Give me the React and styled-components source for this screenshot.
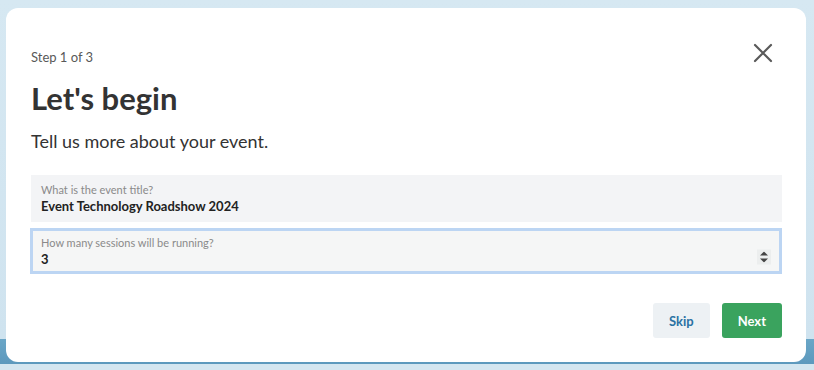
import React from "react";
import styled, { createGlobalStyle } from "styled-components";

const Global = createGlobalStyle`
  html, body { margin: 0; padding: 0; }
  body { font-family: Lato, "Noto Sans", sans-serif; }
`;

const Page = styled.div`
  height: 370px;
  box-sizing: border-box;
  padding: 8px 8px 0 6px;
  background: linear-gradient(
    to bottom,
    #d6e8f2 0px,
    #cfe3ef 339px,
    #6aa6c7 339px,
    #5d99bd 364px,
    #d4e6f0 364px
  );
`;

const Modal = styled.div`
  width: 800px;
  height: 354px;
  box-sizing: border-box;
  background: #fff;
  border-radius: 12px;
  padding: 40px 24px 0 25px;
  display: flex;
  flex-direction: column;
`;

const Header = styled.div`
  display: flex;
  justify-content: space-between;
  align-items: flex-start;
`;

const StepText = styled.div`
  font-size: 13px;
  color: #595959;
  line-height: 18px;
`;

const CloseButton = styled.button`
  border: 0;
  background: none;
  padding: 0;
  margin: -6px 8px 0 0;
  width: 22px;
  height: 22px;
  display: flex;
  align-items: center;
  justify-content: center;
  cursor: pointer;
`;

const Title = styled.h1`
  margin: 12px 0 0;
  font-size: 31px;
  font-weight: 700;
  color: #333;
  line-height: 40px;
`;

const Subtitle = styled.p`
  margin: 11px 0 0;
  font-size: 18px;
  color: #333;
  line-height: 24px;
`;

const Fields = styled.div`
  margin-top: 22px;
  display: flex;
  flex-direction: column;
  gap: 6px;
`;

const Field = styled.label`
  display: flex;
  flex-direction: column;
  justify-content: center;
  box-sizing: border-box;
  height: ${(p) => (p.$focused ? "46px" : "47px")};
  margin-left: ${(p) => (p.$focused ? "-1px" : "0")};
  padding: 0 10px 0 ${(p) => (p.$focused ? "8px" : "10px")};
  background: ${(p) => (p.$focused ? "#f5f6f6" : "#f3f4f6")};
  border: ${(p) => (p.$focused ? "3px solid #bcd5f3" : "0")};
  position: relative;
`;

const FieldLabel = styled.span`
  font-size: 11px;
  color: #8a8a8a;
  line-height: 15px;
`;

const FieldValue = styled.span`
  font-size: 13px;
  font-weight: 700;
  color: #222;
  line-height: 18px;
`;

const Spinner = styled.span`
  position: absolute;
  right: 8px;
  top: 50%;
  transform: translateY(-50%);
  margin-top: 6px;
  width: 14px;
  height: 15px;
  background: #eceeee;
  display: flex;
  align-items: center;
  justify-content: center;
`;

const Actions = styled.div`
  margin-top: 29px;
  display: flex;
  justify-content: flex-end;
  gap: 12px;
`;

const Button = styled.button`
  border: 0;
  border-radius: 3px;
  height: 35px;
  padding: 0 16px;
  font-family: Lato, "Noto Sans", sans-serif;
  font-size: 13px;
  font-weight: 700;
  background: ${(p) => (p.$primary ? "#3aa35e" : "#edf1f4")};
  color: ${(p) => (p.$primary ? "#fff" : "#2b72a3")};
  cursor: pointer;
`;

export default function App() {
  return (
    <>
      <Global />
      <Page>
        <Modal>
          <Header>
            <StepText>Step 1 of 3</StepText>
            <CloseButton aria-label="Close">
              <svg width="20" height="20" viewBox="0 0 20 20">
                <path d="M2 2 L18 18 M18 2 L2 18" stroke="#5a5a5a" strokeWidth="2.2" strokeLinecap="round" />
              </svg>
            </CloseButton>
          </Header>
          <Title>Let's begin</Title>
          <Subtitle>Tell us more about your event.</Subtitle>
          <Fields>
            <Field>
              <FieldLabel>What is the event title?</FieldLabel>
              <FieldValue>Event Technology Roadshow 2024</FieldValue>
            </Field>
            <Field $focused>
              <FieldLabel>How many sessions will be running?</FieldLabel>
              <FieldValue>3</FieldValue>
              <Spinner>
                <svg width="8" height="11" viewBox="0 0 8 11">
                  <path d="M4 0 L8 4 L0 4 Z M0 7 L8 7 L4 11 Z" fill="#444" />
                </svg>
              </Spinner>
            </Field>
          </Fields>
          <Actions>
            <Button>Skip</Button>
            <Button $primary>Next</Button>
          </Actions>
        </Modal>
      </Page>
    </>
  );
}
